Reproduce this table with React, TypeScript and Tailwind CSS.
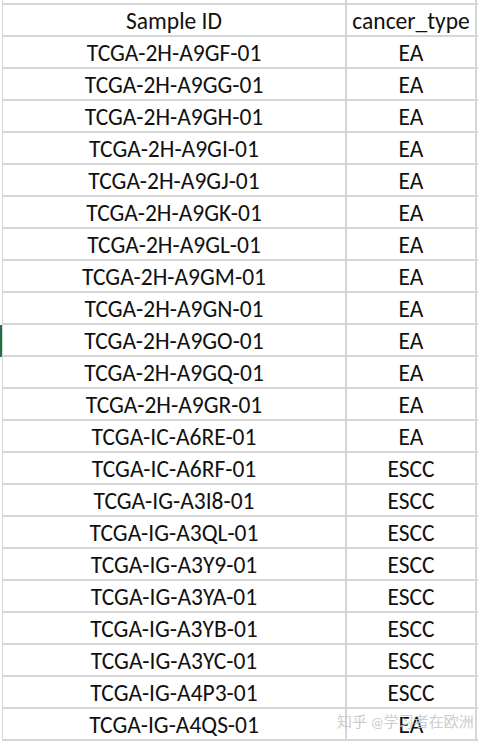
const rows: [string, string][] = [
  ["TCGA-2H-A9GF-01", "EA"],
  ["TCGA-2H-A9GG-01", "EA"],
  ["TCGA-2H-A9GH-01", "EA"],
  ["TCGA-2H-A9GI-01", "EA"],
  ["TCGA-2H-A9GJ-01", "EA"],
  ["TCGA-2H-A9GK-01", "EA"],
  ["TCGA-2H-A9GL-01", "EA"],
  ["TCGA-2H-A9GM-01", "EA"],
  ["TCGA-2H-A9GN-01", "EA"],
  ["TCGA-2H-A9GO-01", "EA"],
  ["TCGA-2H-A9GQ-01", "EA"],
  ["TCGA-2H-A9GR-01", "EA"],
  ["TCGA-IC-A6RE-01", "EA"],
  ["TCGA-IC-A6RF-01", "ESCC"],
  ["TCGA-IG-A3I8-01", "ESCC"],
  ["TCGA-IG-A3QL-01", "ESCC"],
  ["TCGA-IG-A3Y9-01", "ESCC"],
  ["TCGA-IG-A3YA-01", "ESCC"],
  ["TCGA-IG-A3YB-01", "ESCC"],
  ["TCGA-IG-A3YC-01", "ESCC"],
  ["TCGA-IG-A4P3-01", "ESCC"],
  ["TCGA-IG-A4QS-01", "EA"],
];

function Row({ a, b, active }: { a: string; b: string; active?: boolean }) {
  return (
    <div className="flex h-[32px]">
      <div className={`w-[2px] shrink-0 ${active ? "bg-[#1e7145]" : ""}`} />
      <div className="flex flex-1 border-b-2 border-l border-[#d6d6d6]">
        <div className="flex w-[344px] items-center justify-center border-r-2 border-[#d6d6d6] pt-[3px]">{a}</div>
        <div className="flex w-[130px] items-center justify-center border-r-2 border-[#d6d6d6] pt-[3px]">{b}</div>
      </div>
      <div className="w-[6px] shrink-0" />
    </div>
  );
}

export default function App() {
  return (
    <div
      className="relative h-[746px] w-[484px] overflow-hidden bg-white text-[23.5px] leading-none text-[#111]"
      style={{ fontFamily: "Carlito, Lato, 'Noto Sans CJK SC', sans-serif" }}
    >
      <div className="flex h-[5px]">
        <div className="w-[2px]" />
        <div className="flex flex-1 border-b-2 border-l border-[#d6d6d6]">
          <div className="w-[344px] border-r-2 border-[#d6d6d6]" />
          <div className="w-[130px] border-r-2 border-[#d6d6d6]" />
        </div>
        <div className="w-[6px]" />
      </div>
      <Row a="Sample ID" b="cancer_type" />
      {rows.map(([a, b], i) => (
        <Row key={a} a={a} b={b} active={i === 9} />
      ))}
      <div className="pointer-events-none absolute left-[337px] top-[715px] text-[15px] leading-none text-[#c8c8c8] opacity-90">
        知乎 @学习者在欧洲
      </div>
    </div>
  );
}
